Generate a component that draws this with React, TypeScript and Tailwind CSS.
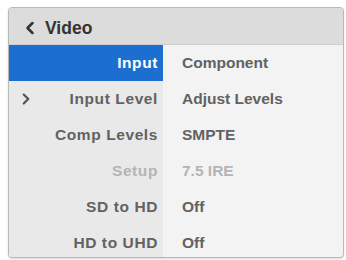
import { ChevronLeft, ChevronRight } from 'lucide-react';

const rows = [
  { label: 'Input', value: 'Component', active: true },
  { label: 'Input Level', value: 'Adjust Levels', more: true },
  { label: 'Comp Levels', value: 'SMPTE' },
  { label: 'Setup', value: '7.5 IRE', disabled: true },
  { label: 'SD to HD', value: 'Off' },
  { label: 'HD to UHD', value: 'Off' },
];

export default function App() {
  return (
    <div className="w-[346px] h-[260px] bg-white pt-[7px] pl-[8px] pr-[2px] font-['Liberation_Sans',Arial,sans-serif]">
      <div className="h-[251px] overflow-hidden rounded-[4px] border border-[#b9b9b9] bg-[#f3f3f3] shadow-[0_1px_2px_rgba(0,0,0,0.15)]">
        <div className="flex h-[37px] items-center gap-[5px] border-b border-[#cfcfcf] bg-[#dcdcdc] pl-[11px] pt-[4px] text-[17.5px] font-bold text-[#333]">
          <ChevronLeft className="h-[20px] w-[20px]" strokeWidth={3} />
          <span>Video</span>
        </div>
        {rows.map((row) => (
          <div key={row.label} className="flex h-[36px] text-[15.5px] font-bold">
            <div
              className={`relative flex w-[154px] items-center justify-end pr-[5px] tracking-[0.6px] ${
                row.active ? 'bg-[#1c6fd1] text-white' : 'bg-[#e9e9e9]'
              } ${row.disabled ? 'text-[#b4b4b4]' : row.active ? '' : 'text-[#626262]'}`}
            >
              {row.more && (
                <ChevronRight className="absolute left-[8px] h-[18px] w-[18px] text-[#555]" strokeWidth={3} />
              )}
              {row.label}
            </div>
            <div
              className={`flex items-center pl-[19px] ${row.disabled ? 'text-[#b4b4b4]' : 'text-[#626262]'}`}
            >
              {row.value}
            </div>
          </div>
        ))}
      </div>
    </div>
  );
}
